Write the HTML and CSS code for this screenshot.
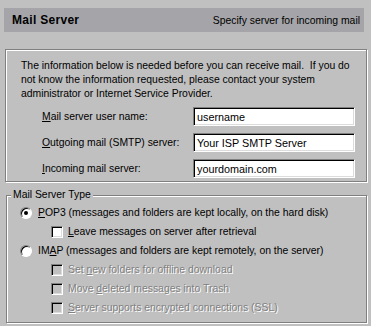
FILE: index.html
```html
<!DOCTYPE html>
<html>
<head>
<meta charset="utf-8">
<link rel="stylesheet" href="styles.css">
</head>
<body>
<div class="page">
  <div class="header">
    <span class="title">Mail Server</span>
    <span class="subtitle">Specify server for incoming mail</span>
  </div>

  <div class="box">
    <p class="intro">The information below is needed before you can receive mail.&nbsp; If you do<br>not know the information requested, please contact your system<br>administrator or Internet Service Provider.</p>
    <div class="fields">
      <label class="lbl"><u>M</u>ail server user name:</label>
      <div class="input">username</div>
      <label class="lbl"><u>O</u>utgoing mail (SMTP) server:</label>
      <div class="input">Your ISP SMTP Server</div>
      <label class="lbl"><u>I</u>ncoming mail server:</label>
      <div class="input">yourdomain.com</div>
    </div>
  </div>

  <fieldset class="group">
    <legend class="legend">Mail Server Type</legend>
    <div class="rows">
      <div class="row"><span class="radio checked"></span><span class="txt"><u>P</u>OP3 (messages and folders are kept locally, on the hard disk)</span></div>
      <div class="row sub"><span class="check"></span><span class="txt"><u>L</u>eave messages on server after retrieval</span></div>
      <div class="row"><span class="radio"></span><span class="txt">IM<u>A</u>P (messages and folders are kept remotely, on the server)</span></div>
      <div class="row sub off"><span class="check"></span><span class="txt">Set <u>n</u>ew folders for offline download</span></div>
      <div class="row sub off"><span class="check"></span><span class="txt">Move <u>d</u>eleted messages into Trash</span></div>
      <div class="row sub off"><span class="check"></span><span class="txt"><u>S</u>erver supports encrypted connections (SSL)</span></div>
    </div>
  </fieldset>
</div>
</body>
</html>
```

FILE: styles.css
```css
* { box-sizing: border-box; }
html, body {
  margin: 0;
  padding: 0;
  background: #c0c0c0;
}
body {
  font-family: "Liberation Sans", Arial, sans-serif;
  font-size: 10.4px;
  color: #000;
  width: 371px;
  height: 326px;
  overflow: hidden;
}
.page {
  display: flex;
  flex-direction: column;
}
.header {
  margin: 8px 7px 0 4px;
  height: 24px;
  background: #a5a5a9;
  display: flex;
  align-items: center;
  justify-content: space-between;
  padding: 0 4px 0 8px;
}
.title {
  font-weight: bold;
  font-size: 12px;
  letter-spacing: 0.3px;
}
.subtitle {
  font-size: 10.4px;
}
.box {
  margin: 17px 4px 0 5px;
  height: 133px;
  border: 1px solid #808080;
  box-shadow: inset 1px 1px #fff, 1px 1px #fff;
  padding: 9px 10px 3px 15px;
}
.intro {
  margin: 0;
  line-height: 14px;
  white-space: nowrap;
}
.fields {
  margin: 6px 0 0 21px;
  display: grid;
  grid-template-columns: 151px 162px;
  grid-auto-rows: 19px;
  row-gap: 7px;
  align-items: center;
}
.lbl {
  white-space: nowrap;
}
.input {
  height: 19px;
  background: #fff;
  border-style: solid;
  border-width: 1px;
  border-color: #808080 #fff #fff #808080;
  box-shadow: inset 1px 1px #000, inset -1px -1px #dcdcdc;
  padding: 0 3px;
  display: flex;
  align-items: center;
  font-size: 10.8px;
}
.group {
  margin: 7px 4px 0 6px;
  padding: 0;
  border: 1px solid #808080;
  box-shadow: inset 1px 1px #fff, 1px 1px #fff;
  min-width: 0;
}
.legend {
  margin-left: 4px;
  padding: 0 2px;
  line-height: 12px;
  font-size: 10.4px;
  background: #c0c0c0;
}
.rows {
  padding: 2px 0 5px 13px;
  display: flex;
  flex-direction: column;
}
.row {
  height: 19px;
  display: flex;
  align-items: center;
  white-space: nowrap;
}
.row.sub {
  padding-left: 31px;
}
.radio {
  width: 12px;
  height: 12px;
  border-radius: 50%;
  background: #fff;
  border: 1px solid;
  border-color: #808080 #fff #fff #808080;
  box-shadow: inset 1px 1px #000;
  margin-right: 6px;
  display: flex;
  align-items: center;
  justify-content: center;
  flex: none;
}
.radio.checked::after {
  content: "";
  width: 4px;
  height: 4px;
  border-radius: 50%;
  background: #000;
}
.check {
  width: 12px;
  height: 12px;
  background: #fff;
  border: 1px solid;
  border-color: #808080 #fff #fff #808080;
  box-shadow: inset 1px 1px #000, inset -1px -1px #dcdcdc;
  margin-right: 5px;
  flex: none;
}
.row.off .check {
  background: #c0c0c0;
}
.row.off .txt {
  color: #808080;
  text-shadow: 1px 1px #fff;
}
u {
  text-decoration: underline;
  text-underline-offset: 1px;
}
```
